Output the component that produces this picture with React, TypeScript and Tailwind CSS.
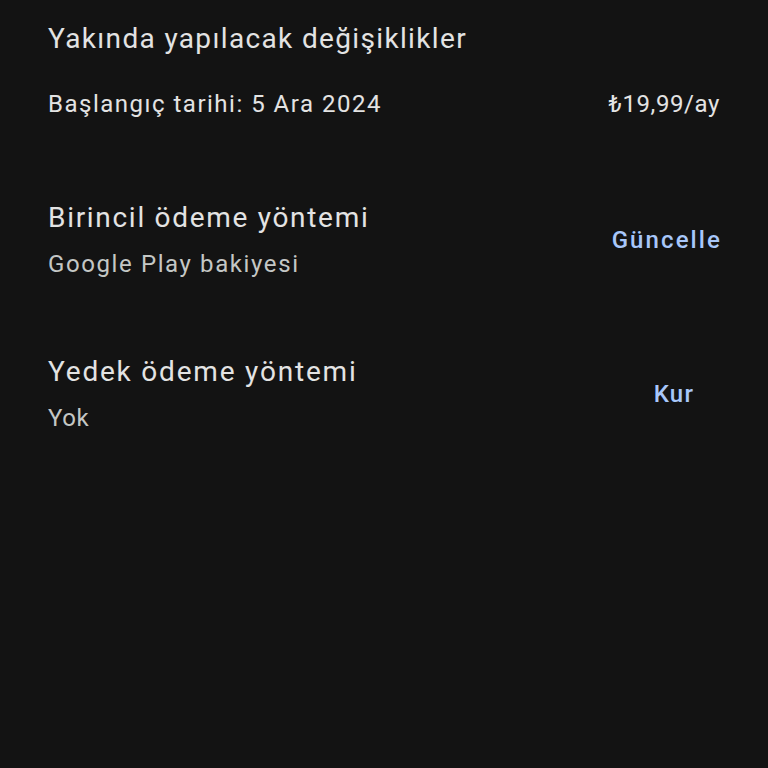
export default function App() {
  return (
    <div
      className="min-h-[768px] w-full bg-[#131313] px-12 pt-[21px] text-[#e3e3e3]"
      style={{ fontFamily: "Roboto, 'Noto Sans', sans-serif" }}
    >
      <h2 className="text-[28px] leading-[36px] tracking-[1.35px]">Yakında yapılacak değişiklikler</h2>

      <div className="mt-[31px] flex items-center justify-between text-[24px] leading-[32px]">
        <span className="tracking-[1.5px]">Başlangıç tarihi: 5 Ara 2024</span>
        <span className="tracking-[0.6px]">₺19,99/ay</span>
      </div>

      <div className="mt-[80px] flex items-center justify-between">
        <div>
          <p className="text-[28px] leading-[36px] tracking-[1.7px]">Birincil ödeme yöntemi</p>
          <p className="mt-3 text-[24px] leading-[32px] tracking-[1.6px] text-[#c4c7c5]">Google Play bakiyesi</p>
        </div>
        <button className="-mr-[2px] min-w-[92px] text-center text-[24px] font-medium leading-[32px] tracking-[2.1px] text-[#a8c7fa]">
          Güncelle
        </button>
      </div>

      <div className="mt-[74px] flex items-center justify-between">
        <div>
          <p className="text-[28px] leading-[36px] tracking-[1.8px]">Yedek ödeme yöntemi</p>
          <p className="mt-3 text-[24px] leading-[32px] tracking-[0.6px] text-[#c4c7c5]">Yok</p>
        </div>
        <button className="min-w-[92px] text-center text-[24px] font-medium leading-[32px] tracking-[1.3px] text-[#a8c7fa]">
          Kur
        </button>
      </div>
    </div>
  );
}
